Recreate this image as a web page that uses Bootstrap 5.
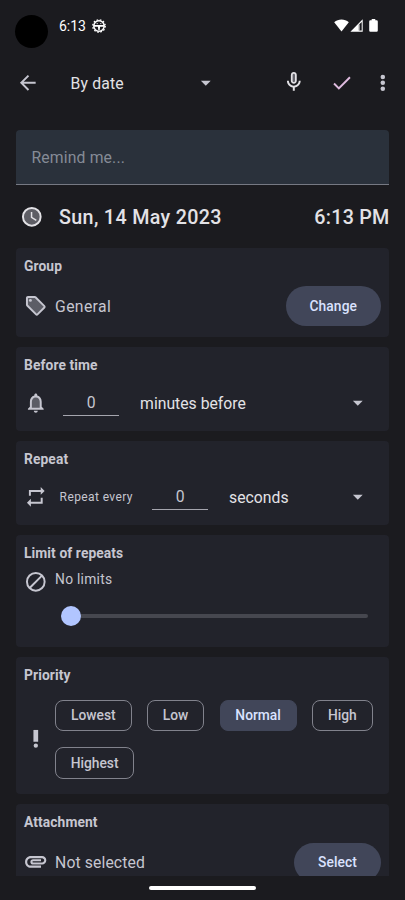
<!DOCTYPE html>
<html lang="en" data-bs-theme="dark">
<head>
<meta charset="utf-8">
<meta name="viewport" content="width=device-width, initial-scale=1">
<title>Reminder</title>
<link rel="stylesheet" href="https://cdn.jsdelivr.net/npm/bootstrap@5.3.0/dist/css/bootstrap.min.css">
<style>
body{background:#1b1b1f;color:#c6c6d0;font-family:Roboto,"Liberation Sans",sans-serif;font-size:15.75px;line-height:20px}
.screen{width:405px;height:900px}
svg{display:block;flex:none;fill:currentColor}
.ic{width:23.6px;height:23.6px}
.panel .ic:first-child{margin-left:-.5px;margin-right:.5px}
.statusbar{height:56px;color:#fff}
.camera{width:33px;height:33px;background:#000;margin:15px 11px 0 15px}
.clock{font-size:14px;font-weight:400;letter-spacing:-.05px;margin-top:16px}
.appbar{height:54px}
.bright{color:#e3e2e6}
.label-text{padding-top:1px;letter-spacing:0}
.remind{height:55px;background:#2a313b;border-bottom:1px solid #767983;border-radius:4px 4px 0 0;color:#858b96;padding:1px 15.5px 0;letter-spacing:.14px}
.when{height:63px;font-size:19.7px;font-weight:500;letter-spacing:.33px;color:#e3e2e6}
.when span{padding-top:2px}
.when .ms-auto{letter-spacing:.25px;margin-right:-.5px}
.panel{background:#22232b;border:0;border-radius:4px;margin-bottom:10px;padding:7.5px 8px 0;color:#c6c6d0}
.panel h2{font-size:13.8px;line-height:20px;font-weight:700;letter-spacing:.1px;margin:0;color:#c6c6d0}
.pill{background:#414659;color:#dae2ff;border:0;border-radius:20px;height:39.5px;font-size:13.8px;font-weight:500;letter-spacing:.12px;padding:1px 0 0}
.num{width:56px;height:26px;border-bottom:1px solid #a5a5ae;text-align:center;line-height:26px}
.slim{font-size:12px;letter-spacing:.4px}
.chips{gap:16px 15.5px}
.chip{height:31.5px;border:1px solid #81828c;border-radius:8px;font-size:13.8px;font-weight:500;letter-spacing:0;display:flex;align-items:center;justify-content:center}
.chip.on{background:#414659;border-color:#414659;color:#dae2ff}
.form-range.limit{width:307px;height:20px}
.limit::-webkit-slider-runnable-track{height:4px;background:#46474f}
.limit::-webkit-slider-thumb{width:20px;height:20px;margin-top:-8px;background:#b1c5ff}
.gesture{height:24px}
.gesture div{width:107px;height:4px;background:#fff}
</style>
</head>
<body>
<div class="screen d-flex flex-column overflow-hidden">
  <header class="statusbar d-flex align-items-start flex-shrink-0">
    <div class="camera rounded-circle"></div>
    <span class="clock">6:13</span>
    <svg width="14" height="14" viewBox="0 0 14 14" style="margin:18.500px 0 0 6px"><circle cx="7" cy="7" r="5.2" fill="none" stroke="#fff" stroke-width="1.5"/><circle cx="7" cy="7" r="6.2" fill="none" stroke="#fff" stroke-width="1.4" stroke-dasharray="1.6 1.65"/><path d="M2 6.1h10v1.6H8.1L7.7 11H6.3l-.4-3.3H2z"/><path d="M4.7 4.6h1M8.3 4.6h1" stroke="#fff" stroke-width="1"/></svg>
    <svg class="ms-auto" width="15" height="13" viewBox="0 0 15 13" style="margin-top:19px"><path d="M.2 3.3C4.2-.4 10.8-.4 14.8 3.3L7.5 12.4z"/></svg>
    <svg width="13" height="13" viewBox="0 0 13 13" style="margin:19px 6px 0 1px"><path d="M.4 12.7 12.7.3v12.4z M8.8 5.8v5.7h2.9V2.9z" fill-rule="evenodd"/><path d="M9.4 5.4h.5v6.1H9.4z"/></svg>
    <svg width="9" height="13" viewBox="0 0 9 13" style="margin:19px 27px 0 0"><path d="M2.7 0h3.6v1.2h1.3q1.2 0 1.2 1.2v9.2q0 1.2-1.2 1.2H1.4q-1.2 0-1.2-1.2V2.4q0-1.2 1.2-1.2h1.3z"/></svg>
  </header>

  <nav class="appbar d-flex align-items-center flex-shrink-0 bright">
    <svg class="ic" viewBox="0 0 24 24" style="margin-left:16px;color:#c6c6d0"><path d="M20 11H7.8l5.6-5.6L12 4l-8 8 8 8 1.4-1.4L7.8 13H20z"/></svg>
    <span class="label-text" style="margin-left:31px;width:123.5px;letter-spacing:.15px">By date</span>
    <svg class="ic" viewBox="0 0 24 24"><path d="m7 10 5 5 5-5z" fill="#c6c6d0"/></svg>
    <svg class="ic" viewBox="0 0 24 24" style="margin-left:64.5px;margin-top:-2px"><path d="M12 14c1.66 0 3-1.34 3-3V5c0-1.66-1.34-3-3-3S9 3.34 9 5v6c0 1.66 1.34 3 3 3z"/><path d="M12 12.3c.8 0 1.2-.6 1.2-1.3V5a1.2 1.2 0 0 0-2.4 0v6c0 .7.4 1.3 1.2 1.3z" fill="#62626a"/><path d="M17 11c0 2.76-2.24 5-5 5s-5-2.24-5-5H5c0 3.53 2.61 6.43 6 6.92V21h2v-3.08c3.39-.49 6-3.39 6-6.92z"/></svg>
    <svg class="ic" viewBox="0 0 24 24" style="margin-left:24.5px;margin-top:-1px;color:#dfbbde"><path d="M9 16.2 4.8 12l-1.4 1.4L9 19 21 7l-1.4-1.4z"/></svg>
    <svg class="ic" viewBox="0 0 24 24" style="margin-left:17.5px;margin-top:-1px;color:#c6c6d0"><circle cx="12" cy="6" r="2.3"/><circle cx="12" cy="12" r="2.3"/><circle cx="12" cy="18" r="2.3"/></svg>
  </nav>

  <main class="flex-grow-1 overflow-hidden px-3" style="padding-top:20px">
    <div class="remind d-flex align-items-center">Remind me...</div>
    <div class="when d-flex align-items-center">
      <svg class="ic" viewBox="0 0 24 24" style="margin-left:4px"><circle cx="12" cy="12" r="9" fill="#5e5e65" stroke="#e3e2e6" stroke-width="2"/><path d="M12.5 7H11v6l5.2 3.2.8-1.3-4.5-2.7z"/></svg>
      <span style="margin-left:15.5px">Sun, 14 May 2023</span>
      <span class="ms-auto">6:13 PM</span>
    </div>

    <section class="card panel" style="height:89px">
      <h2>Group</h2>
      <div class="d-flex align-items-center" style="margin-top:10.5px">
        <svg class="ic" viewBox="0 0 24 24"><path d="M3 4v7.3L12.7 21l7.8-8L11.3 3.5H3.5z" fill="#5c5d66"/><path d="m21.41 11.58-9-9C12.05 2.22 11.55 2 11 2H4c-1.1 0-2 .9-2 2v7c0 .55.22 1.05.59 1.42l9 9c.36.36.86.58 1.41.58s1.05-.22 1.41-.59l7-7c.37-.36.59-.86.59-1.41s-.23-1.06-.59-1.42zM13 20.01 4 11V4h7v-.01l9 9-7 7.02z"/><circle cx="6.5" cy="6.5" r="1.5"/></svg>
        <span class="label-text" style="margin-left:7.5px;padding-top:2px;letter-spacing:.35px">General</span>
        <button class="btn pill ms-auto" style="width:95.5px">Change</button>
      </div>
    </section>

    <section class="card panel" style="height:84px">
      <h2>Before time</h2>
      <div class="d-flex align-items-center" style="margin-top:14px;height:29px">
        <svg class="ic" viewBox="0 0 24 24"><path d="M7 18v-7c0-3 2-5 5-5s5 2 5 5v7z" fill="#5c5d66"/><path d="M12 22c1.1 0 2-.9 2-2h-4c0 1.1.9 2 2 2zm6-6v-5c0-3.07-1.63-5.64-4.5-6.32V4c0-.83-.67-1.5-1.5-1.5s-1.5.67-1.5 1.5v.68C7.64 5.36 6 7.92 6 11v5l-2 2v1h16v-1l-2-2zm-2 1H8v-6c0-2.48 1.51-4.5 4-4.5s4 2.02 4 4.5v6z"/></svg>
        <span class="num" style="margin-left:15.5px">0</span>
        <span class="bright label-text" style="margin-left:21px">minutes before</span>
        <svg class="ic ms-auto" viewBox="0 0 24 24" style="margin-right:11.5px"><path d="m7 10 5 5 5-5z"/></svg>
      </div>
    </section>

    <section class="card panel" style="height:84px">
      <h2>Repeat</h2>
      <div class="d-flex align-items-center" style="margin-top:14px;height:29px">
        <svg class="ic" viewBox="0 0 24 24"><path d="M7 7h10v3l4-4-4-4v3H5v6h2zm10 10H7v-3l-4 4 4 4v-3h12v-6h-2z"/></svg>
        <span class="slim" style="margin-left:12px;width:92.500px">Repeat every</span>
        <span class="num">0</span>
        <span class="bright label-text" style="margin-left:21px">seconds</span>
        <svg class="ic ms-auto" viewBox="0 0 24 24" style="margin-right:11.5px"><path d="m7 10 5 5 5-5z"/></svg>
      </div>
    </section>

    <section class="card panel" style="height:112px">
      <h2>Limit of repeats</h2>
      <div class="d-flex align-items-center" style="margin-top:7px;height:24px">
        <svg class="ic" viewBox="0 0 24 24"><circle cx="12" cy="12" r="9" fill="none" stroke="currentColor" stroke-width="2"/><path d="m5.500 18.500 13-13" stroke="currentColor" stroke-width="2"/></svg>
        <span style="margin-left:7.5px;margin-top:-5px;font-size:13.8px;letter-spacing:.25px">No limits</span>
      </div>
      <input class="form-range limit" type="range" min="0" max="365" value="0" aria-label="Limit" style="margin:12.5px 0 0 37px">
    </section>

    <section class="card panel" style="height:137px">
      <h2>Priority</h2>
      <div class="d-flex align-items-center" style="margin-top:15px">
        <svg class="ic" viewBox="0 0 24 24"><circle cx="12" cy="19" r="2.200"/><path d="M9.600 3h4.800v12H9.600z"/></svg>
        <div class="chips d-flex flex-wrap" style="margin-left:7.500px;width:326px">
          <span class="chip" style="width:76.500px">Lowest</span><span class="chip" style="width:57px">Low</span><span class="chip on" style="width:77px">Normal</span><span class="chip" style="width:60.500px">High</span><span class="chip" style="width:79px">Highest</span>
        </div>
      </div>
    </section>

    <section class="card panel" style="height:89px">
      <h2>Attachment</h2>
      <div class="d-flex align-items-center" style="margin-top:11px">
        <svg class="ic" viewBox="1 1.300 22.200 22.200"><path d="M2 12.500C2 9.460 4.460 7 7.500 7H18c2.210 0 4 1.790 4 4s-1.790 4-4 4H9.500C8.120 15 7 13.880 7 12.500S8.120 10 9.500 10H17v2H9.410c-.55 0-.55 1 0 1H18c1.100 0 2-.9 2-2s-.9-2-2-2H7.500C5.570 9 4 10.570 4 12.500S5.570 16 7.500 16H17v2H7.500C4.460 18 2 15.540 2 12.500z"/></svg>
        <span class="label-text" style="margin-left:7.5px;letter-spacing:.1px">Not selected</span>
        <button class="btn pill ms-auto" style="width:87px">Select</button>
      </div>
    </section>
  </main>

  <footer class="gesture d-flex align-items-center justify-content-center flex-shrink-0"><div class="rounded-pill"></div></footer>
</div>
<script src="https://cdn.jsdelivr.net/npm/bootstrap@5.3.0/dist/js/bootstrap.bundle.min.js"></script>
</body>
</html>
